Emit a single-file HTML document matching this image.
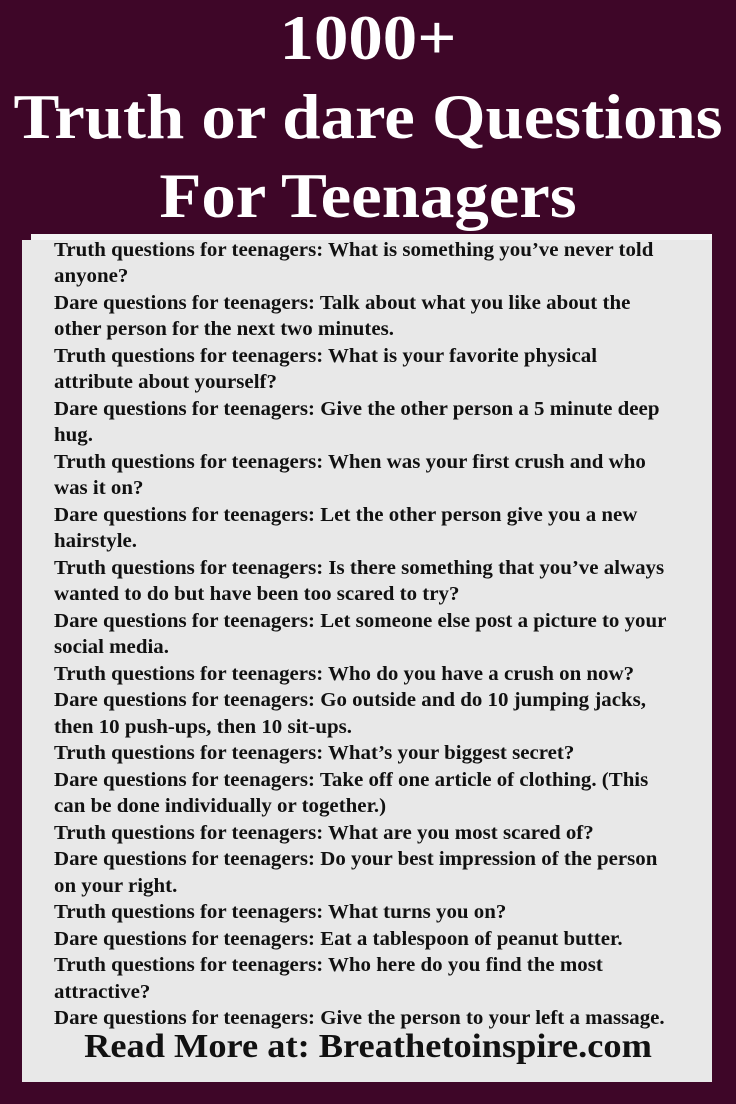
<!DOCTYPE html>
<html><head><meta charset="utf-8"><style>
html,body{margin:0;padding:0;}
body{width:736px;height:1104px;background:#3e0628;position:relative;overflow:hidden;font-family:"Liberation Serif",serif;}
.t{position:absolute;left:0;width:736px;text-align:center;color:#fff;font-weight:bold;white-space:nowrap;transform:scaleX(1.075);transform-origin:center;}
.strip{position:absolute;left:31px;top:234px;width:681px;height:6px;background:#f4f4f4;}
.box{position:absolute;left:22px;top:240px;width:690px;height:842px;background:#e8e8e8;}
.l{position:absolute;left:54px;font-size:20px;font-weight:bold;color:#111;white-space:nowrap;transform:scaleX(1.045);transform-origin:left center;line-height:20px;}
.rm{position:absolute;left:0;width:736px;text-align:center;top:1027px;font-size:34px;font-weight:bold;color:#111;line-height:40px;transform:scaleX(1.07);}
</style></head><body>
<div class="t" style="top:4px;font-size:64px;line-height:68px;">1000+</div>
<div class="t" style="top:82px;font-size:64px;line-height:70px;">Truth or dare Questions</div>
<div class="t" style="top:161px;font-size:64px;line-height:70px;">For Teenagers</div>
<div class="strip"></div>
<div class="box"></div>
<div class="l" style="top:240px">Truth questions for teenagers: What is something you’ve never told</div>
<div class="l" style="top:266px">anyone?</div>
<div class="l" style="top:293px">Dare questions for teenagers: Talk about what you like about the</div>
<div class="l" style="top:319px">other person for the next two minutes.</div>
<div class="l" style="top:346px">Truth questions for teenagers: What is your favorite physical</div>
<div class="l" style="top:372px">attribute about yourself?</div>
<div class="l" style="top:399px">Dare questions for teenagers: Give the other person a 5 minute deep</div>
<div class="l" style="top:425px">hug.</div>
<div class="l" style="top:452px">Truth questions for teenagers: When was your first crush and who</div>
<div class="l" style="top:478px">was it on?</div>
<div class="l" style="top:505px">Dare questions for teenagers: Let the other person give you a new</div>
<div class="l" style="top:531px">hairstyle.</div>
<div class="l" style="top:558px">Truth questions for teenagers: Is there something that you’ve always</div>
<div class="l" style="top:584px">wanted to do but have been too scared to try?</div>
<div class="l" style="top:611px">Dare questions for teenagers: Let someone else post a picture to your</div>
<div class="l" style="top:637px">social media.</div>
<div class="l" style="top:664px">Truth questions for teenagers: Who do you have a crush on now?</div>
<div class="l" style="top:690px">Dare questions for teenagers: Go outside and do 10 jumping jacks,</div>
<div class="l" style="top:717px">then 10 push-ups, then 10 sit-ups.</div>
<div class="l" style="top:743px">Truth questions for teenagers: What’s your biggest secret?</div>
<div class="l" style="top:770px">Dare questions for teenagers: Take off one article of clothing. (This</div>
<div class="l" style="top:796px">can be done individually or together.)</div>
<div class="l" style="top:823px">Truth questions for teenagers: What are you most scared of?</div>
<div class="l" style="top:849px">Dare questions for teenagers: Do your best impression of the person</div>
<div class="l" style="top:876px">on your right.</div>
<div class="l" style="top:902px">Truth questions for teenagers: What turns you on?</div>
<div class="l" style="top:929px">Dare questions for teenagers: Eat a tablespoon of peanut butter.</div>
<div class="l" style="top:955px">Truth questions for teenagers: Who here do you find the most</div>
<div class="l" style="top:982px">attractive?</div>
<div class="l" style="top:1008px">Dare questions for teenagers: Give the person to your left a massage.</div>
<div class="rm">Read More at: Breathetoinspire.com</div>
</body></html>
